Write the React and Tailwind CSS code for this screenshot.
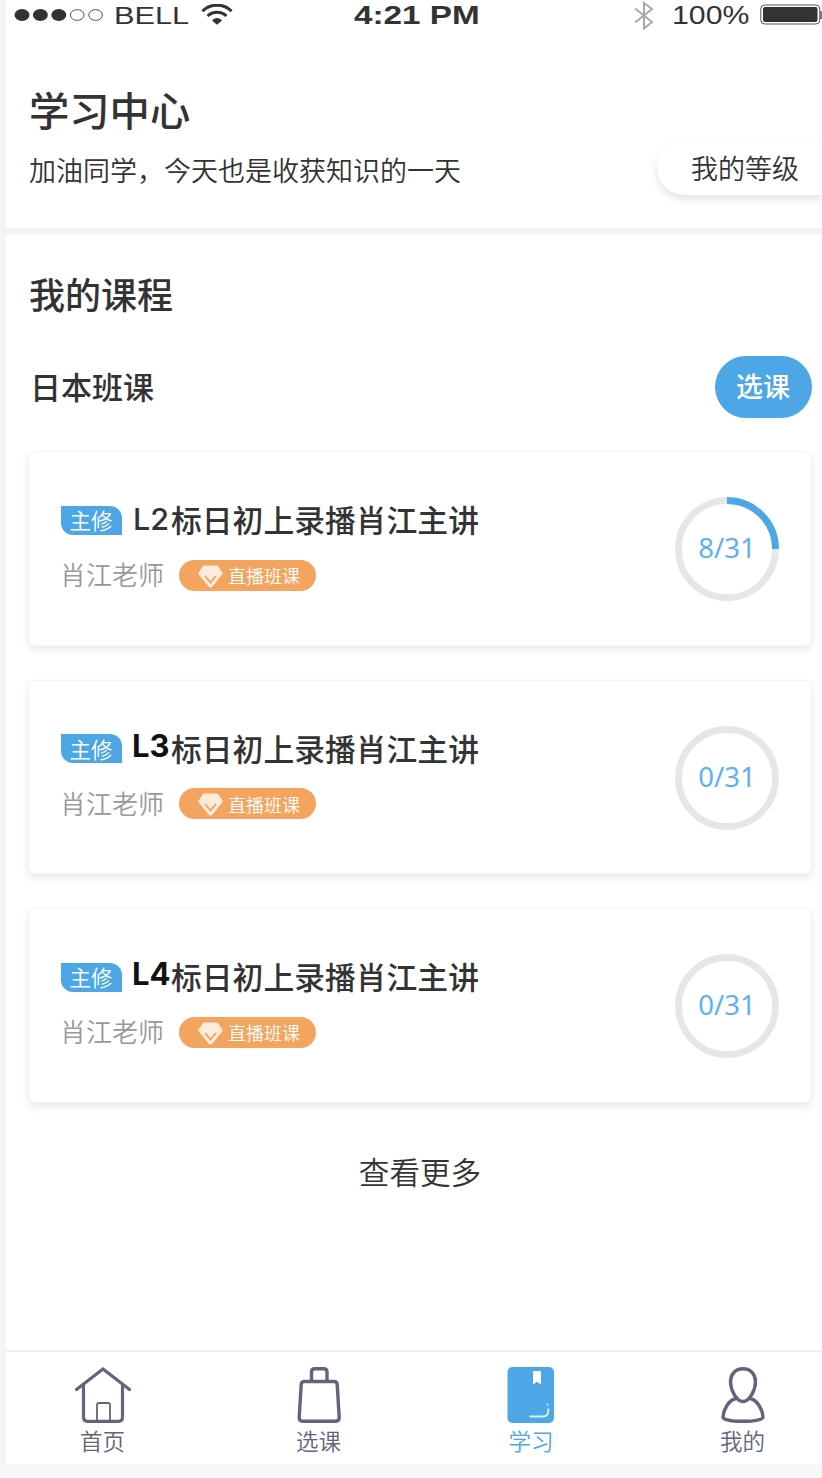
import React from "react";

const INK = "#63637a";

function StatusBar() {
  return (
    <div className="flex h-[32px] shrink-0 items-start overflow-hidden whitespace-nowrap font-['Liberation_Sans',sans-serif] text-[24px] leading-[31px] text-[#333]">
      <svg className="ml-[8px] mt-[8px] h-[14px] w-[92px] shrink-0" viewBox="0 0 92 14">
        <ellipse cx="8" cy="7" rx="7.5" ry="6" fill="#333" />
        <ellipse cx="26.4" cy="7" rx="7.5" ry="6" fill="#333" />
        <ellipse cx="44.8" cy="7" rx="7.5" ry="6" fill="#333" />
        <ellipse cx="63.2" cy="7" rx="6.8" ry="5.4" fill="none" stroke="#555" />
        <ellipse cx="81.6" cy="7" rx="6.8" ry="5.4" fill="none" stroke="#555" />
      </svg>
      <div className="ml-[8px] w-[87px] shrink-0">
        <div className="w-max origin-left scale-x-[1.28]">BELL</div>
      </div>
      <svg className="mt-[4px] h-[21px] w-[32px] shrink-0" viewBox="0 0 32 21" fill="none" stroke="#333">
        <path d="M1.500 7.200C9-.8 23-.8 30.500 7.200" strokeWidth="3" />
        <path d="M6.500 12c5.500-5 13.500-5 19 0" strokeWidth="3" />
        <path d="M11 16.500c2.500-3.400 7.500-3.400 10 0l-5 4.200z" fill="#333" stroke="none" />
      </svg>
      <div className="ml-[121px] w-[282px] shrink-0 text-[25px] font-bold">
        <div className="w-max origin-left scale-x-[1.33]">4:21 PM</div>
      </div>
      <svg className="-ml-[2px] mt-[1px] h-[29px] w-[20px] shrink-0" viewBox="0 0 20 29" fill="none" stroke="#aaa" strokeWidth="2">
        <path d="M1 7.500l17 13.500-8 6.500V2l8 6L1 21.500" />
      </svg>
      <div className="ml-[18px] w-[88px] shrink-0 text-[25px]">
        <div className="w-max origin-left scale-x-[1.21]">100%</div>
      </div>
      <svg className="mt-[4px] h-[22px] w-[62px] shrink-0" viewBox="0 0 62 22">
        <rect x="0.8" y="1" width="59" height="19" rx="4" fill="none" stroke="#555" />
        <rect x="3" y="3" width="54.500" height="15" rx="2" fill="#333" />
        <path d="M61 7v8" stroke="#555" strokeWidth="1.500" />
      </svg>
    </div>
  );
}

function Ring({ done }) {
  return (
    <div className="mt-[2px] grid h-[104px] w-[104px] shrink-0 place-items-center">
      <svg className="col-start-1 row-start-1 h-[104px] w-[104px]" viewBox="0 0 104 104" fill="none" strokeWidth="6.800">
        <circle cx="52" cy="52" r="48.500" stroke="#e6e6e6" />
        {done > 0 && <path d="M52 3.500A48.500 48.500 0 0 1 100.500 52" stroke="#4da6e5" />}
      </svg>
      <span className="col-start-1 row-start-1 pb-[2px] font-['Noto_Sans',sans-serif] text-[27.500px] leading-[30px] text-[#5bb0f8]">
        {done}/31
      </span>
    </div>
  );
}

function CourseCard({ level, done }) {
  return (
    <div className="flex h-[194.500px] shrink-0 items-center justify-between rounded-[8px] border border-[#f5f5f5] bg-white pl-[32px] pr-[32px] shadow-[0_4px_10px_rgba(0,0,0,0.09)]">
      <div className="flex flex-col pb-[9px]">
        <div className="flex h-[44px] items-center whitespace-nowrap">
          <span className="mr-[10px] mt-[2px] flex h-[29px] w-[61px] items-center justify-center rounded-bl-[12px] rounded-tr-[12px] bg-[#4da6e5] pr-[1px] text-[21.500px] font-[350] leading-[26px] text-white">
            主修
          </span>
          {level === "L2" ? (
            <span className="w-[39px] pl-[1px] font-['Inter',sans-serif] text-[30.500px] font-medium leading-[44px] text-[#333]">
              L2
            </span>
          ) : (
            <span className="-mt-[4px] w-[39px] font-['Inter',sans-serif] text-[31px] font-bold leading-[44px] text-[#111]">
              {level}
            </span>
          )}
          <span className="text-[30.800px] font-medium leading-[44px] text-[#333]">标日初上录播肖江主讲</span>
        </div>
        <div className="mt-[17px] flex h-[32px] items-center whitespace-nowrap">
          <span className="-ml-[1px] w-[119px] text-[26px] font-[350] leading-[32px] text-[#999]">肖江老师</span>
          <span className="mt-[2px] flex h-[31px] w-[137px] items-center rounded-full bg-[#f3a560] pl-[18px] text-[18px] font-[350] leading-[28px] text-white">
            <svg className="mr-[4px] mt-[3px] h-[24px] w-[27px]" viewBox="0 0 27 24">
              <path d="M6.500 1h14l5 7.500L15 21.500q-1.500 1.500-3 0L1.500 8.500z" fill="#fdebdc" stroke="#fdebdc" strokeLinejoin="round" />
              <path d="M8.500 11.500l5 6 5-6" fill="none" stroke="#f3a560" strokeWidth="1.900" strokeLinecap="round" />
            </svg>
            直播班课
          </span>
        </div>
      </div>
      <Ring done={done} />
    </div>
  );
}

function HomeIcon() {
  return (
    <svg className="h-[56px] w-[56px]" viewBox="0 0 56 56" fill="none" stroke={INK} strokeWidth="3.200">
      <path d="M1.500 22.500L28 2l26.500 20.500" strokeLinecap="round" />
      <path d="M8.500 18v32q0 4.300 4 4.300h31q4 0 4-4.300V18" />
      <path d="M22 54V38q0-2 2-2h9q2 0 2 2v16" strokeWidth="1.800" />
    </svg>
  );
}

function BagIcon() {
  return (
    <svg className="h-[56px] w-[56px]" viewBox="0 0 56 56" fill="none" stroke={INK} strokeWidth="3.400">
      <path d="M20.500 14V5q0-3.300 3.300-3.300h8.900q3.300 0 3.300 3.300v9" />
      <path d="M13.500 14.500h29.500q3 0 3.200 3l2 33q0 3.700-3.500 3.700h-33q-3.500 0-3.500-3.700l2-33q.2-3 3.300-3z" />
    </svg>
  );
}

function BookIcon() {
  return (
    <svg className="h-[56px] w-[56px]" viewBox="0 0 56 56" fill="none">
      <rect x="4.500" width="46.500" height="56" rx="5" fill="#4da6e5" />
      <path d="M30 4h8v13.500l-4-2.800-4 2.800z" fill="#fff" />
      <path d="M26.500 49.500h14q5 0 5-8" stroke="#e0f2ff" strokeWidth="1.900" />
      <circle cx="44.500" cy="37.500" r="1" fill="#e0f2ff" />
    </svg>
  );
}

function UserIcon() {
  return (
    <svg className="h-[56px] w-[56px]" viewBox="0 0 56 56" fill="none" stroke={INK} strokeWidth="3.400">
      <path d="M28 1.700c-8 0-12.500 6-12.500 13C15.500 22 21 34.500 28 34.500S40.500 22 40.500 14.700c0-7-4.500-13-12.500-13z" />
      <path d="M21 31.500C13.500 33 8.500 43 8 50c0 2.500 7.500 4.300 20 4.300S48 52.500 48 50C47.500 43 42.500 33 35 31.500" />
    </svg>
  );
}

const tabs = [
  { label: "首页", Icon: HomeIcon, box: "mr-[13px] w-[193px]", color: "text-[#63637a]" },
  { label: "选课", Icon: BagIcon, box: "w-[213px]", color: "text-[#63637a]" },
  { label: "学习", Icon: BookIcon, box: "w-[212px]", color: "text-[#4da6e5]" },
  { label: "我的", Icon: UserIcon, box: "w-[211px]", color: "text-[#63637a]" },
];

export default function App() {
  return (
    <div className="flex h-[1478px] w-[822px] flex-col overflow-hidden bg-[#f4f4f4] pl-[6px] font-['Noto_Sans_CJK_SC',sans-serif] text-[#333]">
      <header className="flex h-[228px] shrink-0 flex-col bg-white">
        <StatusBar />
        <h1 className="ml-[23px] mt-[53px] text-[40.300px] font-medium leading-[48px]">学习中心</h1>
        <div className="flex items-start justify-between overflow-hidden pb-[20px] pt-[7px]">
          <p className="ml-[23px] mt-[12px] text-[27px] font-[350] leading-[36px]">加油同学，今天也是收获知识的一天</p>
          <button className="h-[55px] w-[165px] shrink-0 rounded-l-full bg-white pl-[34px] text-left text-[27px] font-[350] leading-[55px] shadow-[0_4px_8px_rgba(0,0,0,0.12)]">
            我的等级
          </button>
        </div>
      </header>

      <main className="mt-[7px] flex h-[1115px] shrink-0 flex-col bg-white pl-[22px] pr-[10px]">
        <h2 className="ml-[1px] mt-[35px] text-[36px] font-medium leading-[46px]">我的课程</h2>
        <div className="mt-[40px] flex h-[62px] items-center justify-between">
          <h3 className="ml-[2px] pb-[2px] text-[31px] font-medium leading-[44px]">日本班课</h3>
          <button className="h-[62px] w-[97px] rounded-full bg-[#4da6e5] pb-[2px] pr-[1px] text-[27px] font-medium leading-[58px] text-white">
            选课
          </button>
        </div>
        <div className="mt-[33px] flex flex-col gap-[34px]">
          <CourseCard level="L2" done={8} />
          <CourseCard level="L3" done={0} />
          <CourseCard level="L4" done={0} />
        </div>
        <button className="mt-[46px] text-center text-[30.600px] font-[350] leading-[44px]">查看更多</button>
      </main>

      <nav className="flex h-[114px] shrink-0 overflow-hidden border-t-2 border-[#eeeeee] bg-white">
        {tabs.map(({ label, Icon, box, color }) => (
          <div key={label} className={`flex shrink-0 flex-col items-center pt-[15px] ${box} ${color}`}>
            <Icon />
            <span className="mt-[3px] text-[22.500px] font-[350] leading-[28px]">{label}</span>
          </div>
        ))}
      </nav>
      <div className="-ml-[6px] flex-1 bg-[#f7f7f7]" />
    </div>
  );
}
